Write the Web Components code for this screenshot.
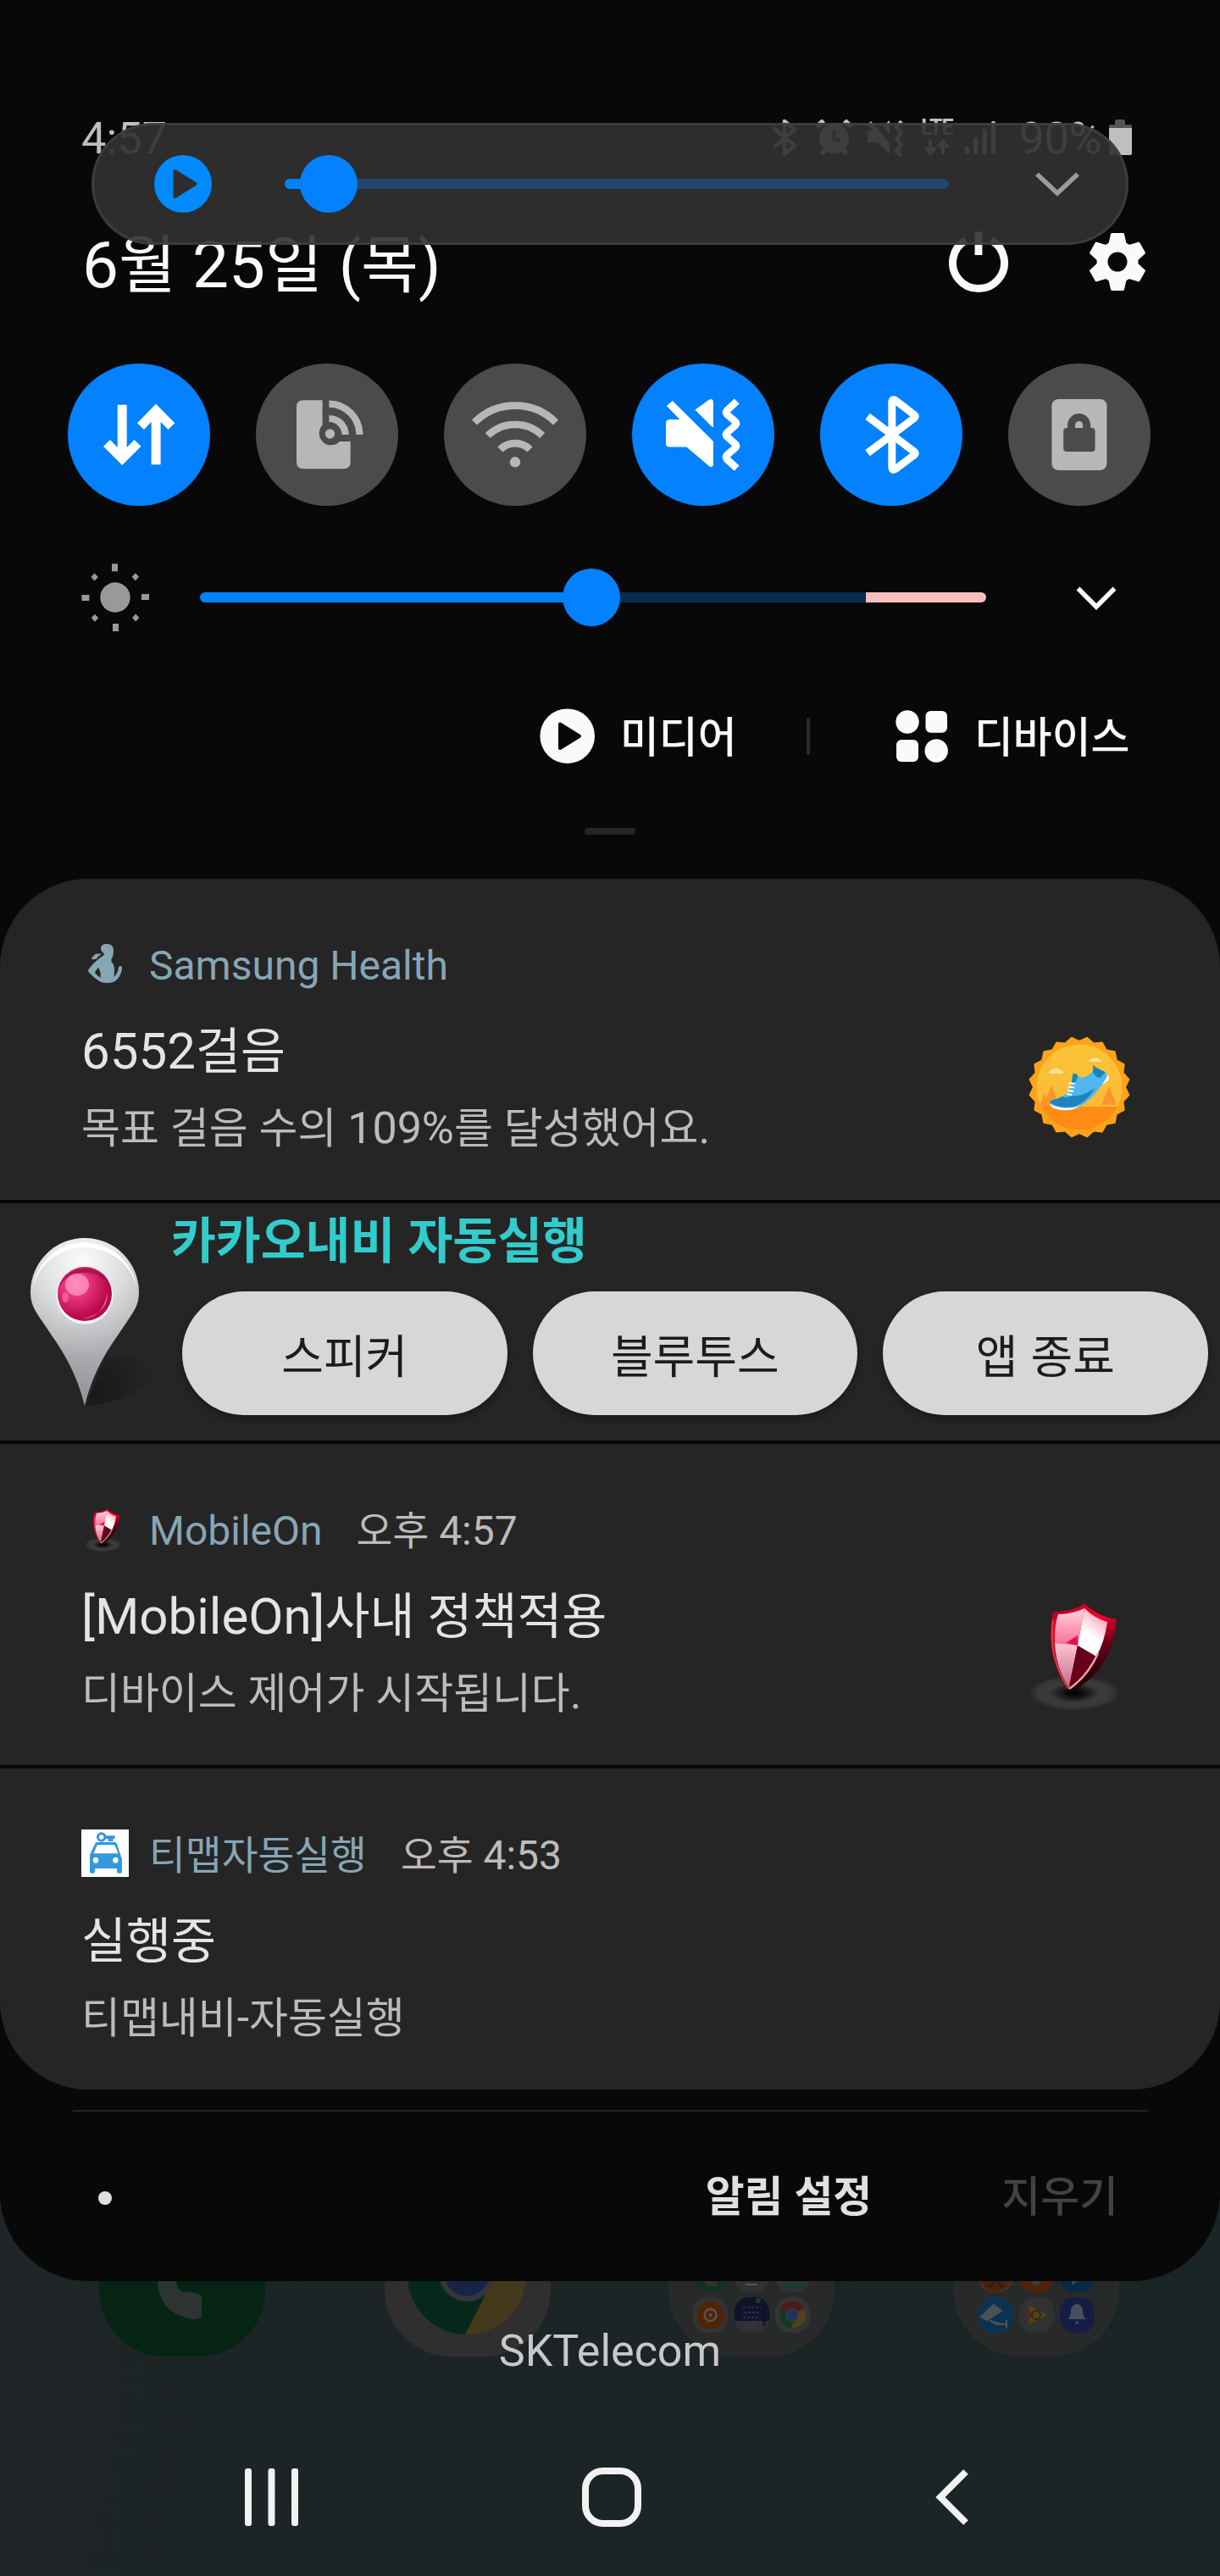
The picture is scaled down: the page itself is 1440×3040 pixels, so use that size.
<!DOCTYPE html>
<html lang="ko">
<head>
<meta charset="utf-8">
<title>Quick panel</title>
<style>
  html, body { margin: 0; padding: 0; background: #1d2426; }
  body { width: 1440px; height: 3040px; overflow: hidden; font-family: Roboto, "Noto Sans CJK KR", sans-serif; }
</style>
</head>
<body>
<phone-screen></phone-screen>
<script>
const BASE = `
  * { box-sizing: border-box; }
  svg { display: block; flex: none; }
  i { font-style: normal; font-size: var(--kr, .94em); letter-spacing: var(--ks, 0); line-height: 0; }
`;
/* Hangul runs are set slightly smaller than the Latin text beside them */
const ko = t => t.replace(/[가-힣]+/g, m => `<i>${m}</i>`);

function define(name, render) {
  customElements.define(name, class extends HTMLElement {
    constructor() { super(); this.attachShadow({ mode: 'open' }); }
    connectedCallback() { this.shadowRoot.innerHTML = `<style>${BASE}</style>` + render(this); }
  });
}

/* ---------- status bar ---------- */
define('status-bar', () => `
<style>
  :host { display: flex; margin-top: 133px; height: 60px; padding: 0 104px 0 96px; align-items: center;
    color: #bfbfbf; font-size: 52.500px; line-height: 60px; white-space: nowrap; }
  .sp { flex: 1; }
  .lte { display: flex; flex-direction: column; width: 40px; height: 44px; margin-left: 20px; align-items: center; }
  .lte b { font: 700 25px/20px Roboto, sans-serif; height: 23px; letter-spacing: -1px; }
  .pct { width: 97px; margin-left: 28px; }
</style>
<span>4:57</span><span class="sp"></span>
<svg width="30" height="44" viewBox="910 140 30 44" fill="none" stroke="#bfbfbf" stroke-width="4.5" stroke-linejoin="round"><path d="M912 150L937 171L925 181V142L937 152L912 173"/></svg>
<svg style="margin-left:22px" width="43" height="44" viewBox="962 140 43 44"><path d="M969 181l5-7M998 181l-5-7M963 149l8-8M1004 149l-8-8" stroke="#bfbfbf" stroke-width="5.500"/><circle cx="983.5" cy="162.500" r="17.500" fill="#bfbfbf"/><path d="M983.500 152v12h8" fill="none" stroke="#333" stroke-width="4"/></svg>
<svg style="margin-left:17px" width="43" height="44" viewBox="1022 140 43 44"><path fill="#bfbfbf" d="M1023 146l4-4l22 26v13l-14-14h-12v-14h6zM1049 141v17l-8-10z"/><path d="M1063 142l-6 7l6 7l-6 7l6 7l-6 7l6 6" fill="none" stroke="#bfbfbf" stroke-width="4"/></svg>
<div class="lte"><b>LTE</b><svg width="32" height="20" viewBox="0 0 32 20" fill="none" stroke="#bfbfbf" stroke-width="4"><path d="M8 1v15M2 10l6 7l6-7M23 18V3M17 10l6-7l6 7"/></svg></div>
<svg style="margin-left:13px" width="36" height="44" viewBox="1138 140 36 44" fill="#bfbfbf"><rect x="1138" y="172" width="5" height="9" rx="2"/><rect x="1148" y="161" width="5" height="20" rx="2"/><rect x="1158.500" y="151" width="5" height="30" rx="2"/><rect x="1169" y="142" width="5" height="39" rx="2"/></svg>
<span class="pct">90%</span>
<svg style="margin-left:9px" width="27" height="44" viewBox="1309 140 27 44"><path fill="#555" d="M1316 142q0-2 2-2h8q2 0 2 2v4h6q2 0 2 2v4h-27v-4q0-2 2-2h5z"/><path fill="#bfbfbf" d="M1309 150h27v30q0 2-2 2h-23q-2 0-2-2z"/></svg>
`);

/* ---------- floating volume bar ---------- */
define('volume-bar', () => `
<style>
  :host { position: absolute; z-index: 3; left: 108px; top: 145px; width: 1224px; height: 144px; border-radius: 72px;
    background: rgba(50,50,50,.908); border: 3px solid rgba(66,66,66,.75); background-clip: border-box;
    display: flex; align-items: center; padding-left: 71px; box-sizing: border-box; }
  slide-track { margin-left: 86px; }
  .chev { margin-left: 100px; margin-bottom: 1px; }
</style>
<svg width="68" height="68" viewBox="182 183 68 68"><circle cx="216" cy="217" r="34" fill="#018bff"/><path d="M206.500 202v30l24-15z" fill="#2e2e2e" stroke="#2e2e2e" stroke-width="4" stroke-linejoin="round"/></svg>
<slide-track width="784" value="52" rest="#23486d"></slide-track>
<svg class="chev" width="56" height="30" viewBox="1220 201 56 30"><path d="M1224 204.500L1248 227L1272 204.500" fill="none" stroke="#9b9b9b" stroke-width="5.500"/></svg>
`);

define('slide-track', el => {
  const w = +el.getAttribute('width'), v = +el.getAttribute('value'), rest = el.getAttribute('rest'), warn = +el.getAttribute('warn') || 0;
  return `
<style>
  :host { display: flex; align-items: center; flex: none; width: ${w}px; height: 68px; }
  .a, .b, .c { height: 12px; flex: none; }
  .a { width: ${v - 34}px; background: #0381fe; border-radius: 6px 0 0 6px; box-shadow: 4px 0 #0381fe; }
  .t { width: 68px; height: 68px; border-radius: 50%; background: #0381fe; flex: none; }
  .b { flex: 1; background: ${rest}; ${warn ? '' : 'border-radius: 0 6px 6px 0;'} box-shadow: -4px 0 ${rest}; }
  .t { position: relative; }
  .c { width: ${warn}px; background: #f6bfbc; border-radius: 0 6px 6px 0; }
</style><span class="a"></span><span class="t"></span><span class="b"></span>${warn ? '<span class="c"></span>' : ''}`;
});

/* ---------- date row ---------- */
define('date-row', () => `
<style>
  :host { display: flex; margin-top: 75px; height: 90px; padding: 0 88px 0 97px; align-items: center;
    font-size: 76.500px; line-height: 90px; color: #fafafa; white-space: nowrap; --kr: .965em; }
  span { flex: 1; }
</style>
<span>${ko('6월 25일 (목)')}</span>
<svg width="70" height="80" viewBox="1121 273 70 80"><path d="M1141 283.500A30.500 30.500 0 1 0 1171 283.500" fill="none" stroke="#fafafa" stroke-width="9"/><rect x="1151.600" y="273.500" width="8.800" height="27.500" fill="#fafafa"/></svg>
<svg style="margin-left:96px" width="66" height="80" viewBox="1287 273 66 80"><g transform="translate(1320 309)" fill="#fafafa" stroke="#fafafa" stroke-width="3" stroke-linejoin="round">
${[0, 60, 120, 180, 240, 300].map(a => `<path transform="rotate(${a})" d="M-6.500-32.500h13l3 13h-19z"/>`).join('')}
<circle r="18" fill="none" stroke-width="13"/></g></svg>
`);

/* ---------- quick toggles ---------- */
const TILES = {
  data: `<path fill="#fff" d="M58.700 48.700h11V99L78.500 90L86.500 97.700L64.200 120L42 97.700L50 90L58.700 99zM98.600 119.300V68.700L90 78L82 70.300L104 47.700L126.300 70.300L118.500 78L109.600 68.700V119.300z"/>`,
  share: `<path fill="#b7b7b7" d="M56 43.300H78.600V72.500A14 14 0 1 0 99 92H111.700V116.300Q111.700 124.300 103.700 124.300H56Q48 124.300 48 116.300V51.300Q48 43.300 56 43.300z"/><circle cx="87.500" cy="83" r="5.700" fill="#b7b7b7"/><path d="M86.400 65A19 19 0 0 1 105.600 84M86.400 47.700A36 36 0 0 1 122.300 84" fill="none" stroke="#b7b7b7" stroke-width="8.200"/>`,
  wifi: `<circle cx="84" cy="116.300" r="6.200" fill="#b7b7b7"/><path d="M36 69.500A68 68 0 0 1 132 69.500M51.800 85A46.500 46.500 0 0 1 116.200 85M66.500 101.500A24.500 24.500 0 0 1 101.500 101.500" fill="none" stroke="#b7b7b7" stroke-width="8.600"/>`,
  mute: `<path fill="#fff" stroke="#fff" stroke-linejoin="round" d="M41.300 50L47.800 44.500L95.300 91.700V120.500Q94 122.500 91.500 121L64.300 98H43.500Q40.500 98 40.500 95V70Q40.500 66.700 43.500 66.700H57.400zM95.300 44.500V75L75 54.700L90.500 43.500Q95 41 95.300 44.500z"/><path d="M123.700 44.500L112 55.500Q110 57.700 112 60L122 68.500Q124 70.800 122 73L112 81.700Q110 84 112 86.300L122 95Q124 97.300 122 99.500L112 108Q110 110.500 112 113L123.700 123.700" fill="none" stroke="#fff" stroke-width="8.500"/>`,
  bt: `<path d="M56 62.300L111 104Q113.500 106 111 108L89 124.500Q84.800 127 84.800 122V46Q84.800 41 89 43.500L111 60.500Q113.500 62.500 111 64.500L56 105.700" fill="none" stroke="#fff" stroke-width="9" stroke-linejoin="round"/>`,
  lock: `<rect x="51.400" y="42" width="65" height="84" rx="8" fill="#b7b7b7"/><rect x="65.200" y="76" width="37.300" height="28" rx="4" fill="#4b4b4b"/><path d="M74.600 78V72.500a9 9 0 0 1 18 0V78" fill="none" stroke="#4b4b4b" stroke-width="9"/>`
};
define('quick-tile', el => `
<style>
  :host { display: block; width: 168px; height: 168px; border-radius: 50%; background: ${el.hasAttribute('on') ? '#0381fe' : '#4b4b4b'}; }
</style>
<svg width="168" height="168" viewBox="0 0 168 168">${TILES[el.getAttribute('kind')]}</svg>`);

define('tile-row', () => `
<style>:host { display: flex; gap: 54px; margin-top: 71px; padding-left: 80px; height: 168px; }</style>
<quick-tile kind="data" on></quick-tile><quick-tile kind="share"></quick-tile><quick-tile kind="wifi"></quick-tile>
<quick-tile kind="mute" on></quick-tile><quick-tile kind="bt" on></quick-tile><quick-tile kind="lock"></quick-tile>`);

/* ---------- brightness ---------- */
define('brightness-row', () => `
<style>
  :host { display: flex; align-items: center; height: 80px; margin-top: 68px; padding-left: 96px; }
  slide-track { margin: 0 105px 0 60px; }
</style>
<svg width="80" height="80" viewBox="96 665 80 80" fill="#999"><circle cx="136" cy="705" r="17.700"/>
<rect x="132" y="665.300" width="7" height="9"/><rect x="133" y="736" width="7" height="9"/><rect x="96.400" y="702" width="9" height="7"/><rect x="167" y="701" width="9" height="7"/>
${[[111.600, 681], [159.800, 680.700], [112, 729.300], [160.200, 729]].map(p => `<path transform="translate(${p})" d="M0-4.500L4.200 0L0 4.500L-4.200 0z"/>`).join('')}</svg>
<slide-track width="928" value="462" rest="#062c50" warn="142"></slide-track>
<svg width="50" height="30" viewBox="1269 690 50 30"><path d="M1272.500 694.500L1294 716L1315.500 694.500" fill="none" stroke="#fafafa" stroke-width="5.500"/></svg>`);

/* ---------- media / devices ---------- */
define('media-row', () => `
<style>
  :host { display: flex; align-items: center; height: 66px; margin-top: 91px; padding-left: 637px;
    font-size: 53px; line-height: 66px; font-weight: 500; color: #fafafa; white-space: nowrap; }
  .m { margin-left: 29px; width: 134px; padding-top: 2px; }
  .bar { margin-left: 86px; width: 4px; height: 44px; border-radius: 2px; background: #2a2a2a; }
  .d { margin-left: 101px; }
  .n { margin-left: 31px; padding-top: 2px; }
</style>
<svg width="66" height="66" viewBox="637 836 66 66"><circle cx="669.700" cy="868.700" r="32.300" fill="#fafafa"/><path d="M661 854.500v28.500l23-14.200z" fill="#080808" stroke="#080808" stroke-width="4" stroke-linejoin="round"/></svg>
<span class="m">${ko('미디어')}</span><span class="bar"></span>
<svg class="d" width="62" height="66" viewBox="1057 836 62 66" fill="#fafafa"><circle cx="1071" cy="852" r="13.700"/><rect x="1092.500" y="839" width="25.500" height="25.700" rx="6"/><rect x="1058" y="873" width="26" height="26" rx="6"/><circle cx="1105.200" cy="886" r="13.700"/></svg>
<span class="n">${ko('디바이스')}</span>`);

/* ---------- notification icons ---------- */
const SHIELD = `
<defs>
<radialGradient id="sh"><stop offset="0" stop-color="#000"/><stop offset=".22" stop-color="#111"/><stop offset=".55" stop-color="#3b3b3b"/><stop offset=".8" stop-color="#383838"/><stop offset="1" stop-color="#252525"/></radialGradient>
<linearGradient id="r" x1="0" y1="0" x2=".3" y2="1"><stop offset="0" stop-color="#a00020"/><stop offset=".35" stop-color="#f5002c"/><stop offset=".65" stop-color="#6a0018"/><stop offset="1" stop-color="#1a0008"/></linearGradient>
<linearGradient id="p1" x1="0" y1="0" x2="0" y2="1"><stop offset="0" stop-color="#ffd3e0"/><stop offset="1" stop-color="#ff6d98"/></linearGradient>
<linearGradient id="p2" x1=".8" y1="0" x2=".3" y2="1"><stop offset="0" stop-color="#ff8fb0"/><stop offset=".6" stop-color="#fff"/></linearGradient>
<linearGradient id="p3" x1="0" y1="0" x2="0" y2="1"><stop offset="0" stop-color="#ffc4d6"/><stop offset="1" stop-color="#c66a8c"/></linearGradient>
</defs>
<ellipse cx="1268" cy="1998" rx="54" ry="21" fill="url(#sh)"/>
<path d="M1280 1892Q1296 1908 1318 1911Q1314 1966 1271 1993L1261 1995Q1234 1958 1242 1906Q1244 1901 1249 1902Q1270 1900 1280 1892z" fill="url(#r)"/>
<path d="M1243 1912Q1237 1956 1261 1993" fill="none" stroke="#e23a45" stroke-width="2"/>
<path d="M1249 1905Q1266 1905 1280 1898L1272 1941L1245 1939Q1244 1920 1249 1905z" fill="url(#p1)"/>
<path d="M1280 1898Q1292 1910 1307 1914Q1304 1937 1294 1955L1272 1942z" fill="url(#p2)"/>
<path d="M1245 1939L1272 1941L1262 1992Q1246 1968 1245 1939z" fill="url(#p3)"/>
<path d="M1258 1939L1272 1930V1942z" fill="#e8104e"/>
<path d="M1272 1942L1294 1955Q1282 1977 1262 1989z" fill="#66001c"/>
<path d="M1296 1951Q1284 1978 1262 1993" fill="none" stroke="#efa0a4" stroke-width="2.600"/>`;

const ICONS = {
  health: `<svg width="56" height="56" viewBox="96 1109 56 56" fill="#87a6b5"><path d="M126.500 1114q7.500 0 7.500 8q0 5-1.500 8q-2 2-1 5q4 3 3.500 12q0 4-1 6q4-3 5.500-8q0-5 2.500-5q2.500 0 2 4q-2 10-9 14.500q-9 3-17 0q-8-5-13-11q-2-2 0-4q5-7 14-14q4-2 4-4q-4-3-4-6q0-6 7.500-5.500z"/><path d="M108 1132q2-6 7-6.500l5 0q-4 3-6 6q-3 1-6 .5z"/><path d="M116 1142q-5 5-3.500 7l6 5q1-7-2.500-12z" fill="#252525"/></svg>`,
  shield: `<svg width="56" height="56" viewBox="1204.400 1880.500 140 140">${SHIELD}</svg>`,
  car: `<svg width="56" height="56" viewBox="96 2159 56 56"><rect x="96" y="2159" width="56" height="56" fill="#fff"/><g fill="#3498db"><circle cx="119.700" cy="2168" r="4.200" fill="none" stroke="#3498db" stroke-width="3"/><path d="M124 2166.300h11.500v3.800h-2v3h-6v-3h-3.500z"/><path d="M112 2176q.5-2 2.500-2h21q2 0 2.500 2l6 18v14.500q0 2.200-2 2.200h-2q-2 0-2-2v-3.700h-26v3.700q0 2-2 2h-2q-2 0-2-2.200V2189z"/></g><path fill="#fff" d="M114.800 2177.300h20.400l4.300 10h-29z"/><ellipse cx="113" cy="2195.300" rx="3.200" ry="3.500" fill="#fff"/><ellipse cx="136.400" cy="2195.300" rx="3.200" ry="3.500" fill="#fff"/></svg>`
};

let burst = '';
for (let k = 0; k < 40; k++) {
  const a = (k * 9 - 90) * Math.PI / 180, r = k % 2 ? 59 : 54;
  burst += (k ? 'L' : 'M') + (1274 + r * Math.cos(a)).toFixed(1) + ' ' + (1280 + r * Math.sin(a)).toFixed(1);
}
const LARGE = {
  badge: `<svg width="122" height="122" viewBox="1213 1219 122 122">
<defs><linearGradient id="g" x1="0" y1="0" x2="0" y2="1"><stop offset="0" stop-color="#fbc337"/><stop offset="1" stop-color="#fcb83a"/></linearGradient><clipPath id="c"><circle cx="1274" cy="1280" r="50.500"/></clipPath></defs>
<path d="${burst}z" fill="#fba31a" stroke="#fba31a" stroke-width="2" stroke-linejoin="round"/>
<g clip-path="url(#c)"><rect x="1220" y="1225" width="110" height="110" fill="url(#g)"/>
<path d="M1233 1286l-6 17h12zM1241 1277l-9 26h18zM1309 1279l-9 22h18z" fill="#fd962a"/>
<rect x="1220" y="1303" width="110" height="32" fill="#fd8b14"/>
<path d="M1238 1264q1-5 6-5q3-3 6 0q5 1 5 5zM1285 1250q2-4 6-4q5-2 9 3v1z" fill="#fde09a"/></g>
<path d="M1239.500 1300Q1240 1305 1252 1307Q1268 1309 1277 1300Q1291 1283 1308 1272Q1310 1268 1307 1265L1303 1268Q1290 1289 1276 1299Q1262 1306 1240 1299z" fill="#fff"/>
<path d="M1290.500 1253.500Q1291 1257 1297 1259L1304.500 1262Q1308 1265 1306 1269Q1294 1289 1279 1300Q1268 1306 1253 1304Q1241 1303 1239 1298Q1240 1295 1248 1294Q1262 1288 1264 1279Q1265 1270 1266.500 1264Q1270 1263 1272.500 1267Q1277 1271 1284 1266Q1292 1263 1290.500 1253.500z" fill="#4fb7ee"/>
<path d="M1239 1298Q1240 1295 1247 1294L1254 1291Q1258 1293 1263 1291L1277 1289Q1285 1286 1293 1281Q1280 1300 1267 1303Q1252 1306 1239 1298z" fill="#1e84bd"/>
<path d="M1290.500 1253.500Q1292 1257 1304.500 1262L1299 1269Q1292 1268 1290 1262zM1266.500 1264Q1270 1263 1272.500 1267L1268 1277L1264.500 1276z" fill="#1787b9"/>
<path d="M1262 1275l7 1M1261 1279.500l7 1M1260 1284l7 1M1259 1288l6 1" stroke="#fff" stroke-width="2.200"/></svg>`,
  shield: `<svg width="122" height="122" viewBox="1213 1886 122 122" overflow="visible">${SHIELD}</svg>`
};

/* ---------- notification card ---------- */
define('notice-card', el => {
  const g = n => el.getAttribute(n) || '';
  return `
<style>
  :host { display: flex; height: 379px; padding: 0 105px 0 96px; background: #252525; white-space: nowrap; --kr: .96em; }
  .txt { flex: 1; padding-top: 72px; }
  .head { display: flex; height: 60px; font-size: 48px; line-height: 61px; color: #87a6b5; --kr: .97em; }
  .app { margin-left: 24px; }
  .time { margin-left: 40px; color: #bcbcbc; }
  .title { margin-top: 36px; font-size: 60px; line-height: 71px; height: 70px; color: #e4e4e4; }
  .body { margin-top: 24px; font-size: 52px; line-height: 65px; height: 64px; color: #bcbcbc; }
  .large { padding-top: ${g('large') === 'badge' ? 185 : 182}px; }
</style>
<div class="txt">
  <div class="head">${ICONS[g('icon')]}<span class="app">${ko(g('app'))}</span>${g('time') ? `<span class="time">${ko(g('time'))}</span>` : ''}</div>
  <div class="title">${ko(g('heading'))}</div>
  <div class="body">${ko(g('body'))}</div>
</div>
<div class="large">${LARGE[g('large')] || ''}</div>`;
});

define('pill-button', () => `
<style>
  :host { display: flex; width: 383.500px; height: 146px; border-radius: 73px; background: #d6d8d7; color: #1c1c1c;
    align-items: center; justify-content: center; box-shadow: 0 5px 8px rgba(0,0,0,.3); padding-top: 1px; box-sizing: border-box;
    font-family: "Noto Sans CJK KR", sans-serif; font-size: 54px; line-height: 60px; }
</style><slot></slot>`);

define('navi-card', () => `
<style>
  :host { display: flex; height: 280px; background: #252525; white-space: nowrap; --kr: .95em; }
  .pin { padding: 35px 0 0 30px; width: 202px; flex: none; }
  .title { height: 70px; line-height: 70px; margin-top: 10px; font-size: 60.500px; font-weight: 700; color: #33cccc; }
  .btns { display: flex; gap: 30px; margin: 24px 0 0 13px; }
</style>
<div class="pin"><svg width="160" height="215" viewBox="30 1455 160 215">
<defs>
<radialGradient id="w" gradientUnits="userSpaceOnUse" cx="96" cy="1490" r="150"><stop offset="0" stop-color="#fbfbfb"/><stop offset=".35" stop-color="#dcddde"/><stop offset=".75" stop-color="#a9aaad"/><stop offset="1" stop-color="#98999d"/></radialGradient>
<radialGradient id="b" gradientUnits="userSpaceOnUse" cx="90" cy="1516" r="38"><stop offset="0" stop-color="#ff5fa0"/><stop offset=".5" stop-color="#e32a74"/><stop offset="1" stop-color="#b80b4c"/></radialGradient>
<radialGradient id="s" gradientUnits="userSpaceOnUse" cx="110" cy="1642" r="72"><stop offset="0" stop-color="#181818"/><stop offset="1" stop-color="#252525"/></radialGradient>
</defs>
<path d="M101 1659Q150 1655 176 1630Q186 1612 160 1600L124 1602z" fill="url(#s)"/>
<path d="M100 1659C88 1610 66 1584 51 1561C43 1549 36 1541 36 1525A64 64 0 0 1 164 1525C164 1541 157 1549 149 1561C134 1584 112 1610 100 1659z" fill="url(#w)"/>
<path d="M39 1520A61.500 61.500 0 0 1 161 1520A62 58 0 0 0 39 1520z" fill="#fff"/>
<circle cx="100" cy="1529" r="33.500" fill="#f6f6f6"/><circle cx="100" cy="1527" r="32" fill="url(#b)"/>
<path d="M68.500 1523A32 32 0 0 1 131.500 1523Q124 1502 100 1502Q76 1502 68.500 1523z" fill="#9c1048" opacity=".8"/>
<ellipse cx="91" cy="1516" rx="14" ry="13" fill="#ffa6cb" opacity=".65"/><ellipse cx="77" cy="1531" rx="4" ry="6" fill="#f77bac" opacity=".6"/>
<path d="M127 1525Q128 1550 98 1556Q121 1556 127 1525z" fill="#f48bb4" opacity=".75"/></svg></div>
<div><div class="title">${ko('카카오내비 자동실행')}</div>
<div class="btns"><pill-button>스피커</pill-button><pill-button>블루투스</pill-button><pill-button>앱 종료</pill-button></div></div>`);

define('notice-list', () => `
<style>:host { display: flex; flex-direction: column; gap: 4px; margin-top: 52px; border-radius: 104px; overflow: hidden; height: 1429px; }</style>
<notice-card icon="health" app="Samsung Health" heading="6552걸음" body="목표 걸음 수의 109%를 달성했어요." large="badge"></notice-card>
<navi-card></navi-card>
<notice-card icon="shield" app="MobileOn" time="오후 4:57" heading="[MobileOn]사내 정책적용" body="디바이스 제어가 시작됩니다." large="shield"></notice-card>
<notice-card icon="car" app="티맵자동실행" time="오후 4:53" heading="실행중" body="티맵내비-자동실행"></notice-card>`);

define('panel-footer', () => `
<style>
  :host { display: block; padding-top: 24px; --kr: .96em; }
  .line { margin: 0 84px 0 84px; height: 2px; border-radius: 20px / 2px; background: #262626; }
  .row { display: flex; align-items: center; height: 202px; padding: 0 120px 0 116px; font-size: 52px; line-height: 64px; white-space: nowrap; }
  .dot { width: 16px; height: 16px; border-radius: 50%; background: #e0e0e0; margin-top: 2px; }
  .set { margin-left: auto; font-weight: 700; color: #e0e0e0; }
  .clr { margin-left: 153px; color: #424242; font-weight: 500; }
</style>
<div class="line"></div>
<div class="row"><span class="dot"></span><span class="set">${ko('알림 설정')}</span><span class="clr">${ko('지우기')}</span></div>`);

define('quick-panel', () => `
<style>
  :host { display: flex; flex-direction: column; position: relative; z-index: 1; height: 2692px; background: #080808; border-radius: 0 0 104px 104px; overflow: hidden; }
  .handle { width: 60px; height: 8px; border-radius: 4px; background: #262626; margin: 75px auto 0; flex: none; }
  :host > * { flex: none; }
</style>
<status-bar></status-bar><volume-bar></volume-bar><date-row></date-row><tile-row></tile-row><brightness-row></brightness-row><media-row></media-row>
<div class="handle"></div><notice-list></notice-list><panel-footer></panel-footer>`);

/* ---------- dimmed home screen behind the panel ---------- */
const sq = (x, f) => `<rect x="${x}" y="2585" width="196" height="196" rx="78" fill="${f}"/>`;
const mini = (x, y, f) => `<rect x="${x - 20}" y="${y}" width="41" height="42" rx="17" fill="${f}"/>`;
define('home-dock', () => `
<style>:host { display: block; }</style>
<svg width="1440" height="197" viewBox="0 2585 1440 197">
${sq(117, '#062414')}<path d="M186 2680v12q1 35 36 44q10 3 16-2v-25q-14-6-22-4q-8-4-8-13v-14z" fill="#2d3332"/>
${sq(454, '#2f2f2f')}
<circle cx="551" cy="2685" r="70" fill="#06281a"/><path d="M577 2700L549 2755A70 70 0 0 0 621 2680H580z" fill="#44391a"/><circle cx="551" cy="2683" r="33" fill="#343639"/><circle cx="551" cy="2683" r="26.500" fill="#172448"/>
${sq(789, '#272a29')}
${mini(839, 2663, '#14321c')}${mini(887, 2663, '#303231')}${mini(935, 2663, '#303231')}
<path d="M831 2692h16l-2 6h-10z" fill="#303431"/><path d="M880 2696h14" stroke="#555" stroke-width="2"/><path d="M924 2699l11-16l11 16z" fill="none" stroke="#12402a" stroke-width="3"/>
${mini(838, 2711, '#333332')}<circle cx="838.500" cy="2732" r="16" fill="#512408"/><circle cx="838.500" cy="2732" r="7" fill="none" stroke="#555" stroke-width="2.500"/><circle cx="838.500" cy="2732" r="2" fill="#555"/>
${mini(887, 2711, '#11112a')}<path d="M867 2739h41q-2 14-17 14h-8q-13 0-16-14z" fill="#303236"/><path d="M887 2739l4 4h-4v10" fill="#3c3e42"/><path d="M877 2723h21M878 2729h19M877 2735h21" stroke="#2b2e42" stroke-width="2.400" stroke-dasharray="3 2"/><circle cx="895" cy="2715" r="3" fill="#17401c"/><path d="M902 2739v6" stroke="#1c1640" stroke-width="4"/>
${mini(935, 2711, '#333433')}<circle cx="935" cy="2732" r="15" fill="#123824"/><path d="M921 2725A15 15 0 0 1 949 2725L935 2732z" fill="#4d1a18"/><path d="M949 2725A15 15 0 0 1 934 2747L941 2728z" fill="#50421a"/><circle cx="935" cy="2732" r="7" fill="#1e3260" stroke="#383c3e" stroke-width="1.500"/>
${sq(1125, '#272a29')}
${mini(1175, 2663, '#3b3330')}<circle cx="1175" cy="2686" r="18" fill="#4e2004"/><path d="M1167 2699l8-8l8 8" fill="none" stroke="#222" stroke-width="3"/>${mini(1223, 2663, '#50220a')}<circle cx="1223" cy="2690" r="7" fill="#3e3a38"/>${mini(1271, 2663, '#06294a')}<path d="M1265 2697v-8l12 0z" fill="#444"/>
${mini(1175, 2711, '#0f3150')}<path d="M1158 2734l15-14l9 7l-17 11zM1168 2738l8 5h12M1188 2738v10" fill="#4a5258" stroke="#4a5258" stroke-width="2"/>
${mini(1223, 2711, '#303231')}<path d="M1213 2720l23 12l-23 12z" fill="#574016"/><path d="M1213 2720l5 12l-5 12z" fill="#5a241a"/><circle cx="1223" cy="2732" r="5" fill="none" stroke="#2e2a10" stroke-width="2"/>
${mini(1271, 2711, '#161c44')}<path d="M1260 2737q4-3 4-11q1-6 7-7q6 1 7 7q0 8 4 11z" fill="#4a4e5c"/><circle cx="1271" cy="2741" r="2" fill="#2f4a78"/>
</svg>`);

define('nav-bar', () => `
<style>
  :host { display: flex; align-items: center; height: 190px; padding-left: 289px; }
</style>
<svg width="63" height="68" viewBox="0 0 63 68" fill="#f2f2f2"><rect width="8" height="68" rx="3"/><rect x="27.500" width="8" height="68" rx="3"/><rect x="55" width="8" height="68" rx="3"/></svg>
<svg style="margin-left:335px" width="70" height="70" viewBox="0 0 70 70"><rect x="4" y="4" width="62" height="62" rx="21" fill="none" stroke="#f2f2f2" stroke-width="8"/></svg>
<svg style="margin-left:347px" width="40" height="68" viewBox="0 0 40 68"><path d="M36 4L6 34L36 64" fill="none" stroke="#f2f2f2" stroke-width="8"/></svg>`);

define('phone-screen', () => `
<style>
  :host { display: flex; flex-direction: column; width: 1440px; height: 3040px; overflow: hidden; position: relative;
    background: linear-gradient(100deg, #232727 0%, #1c2426 45%, #1a2525 100%); }
  :host > * { flex: none; }
  home-dock { margin-top: -107px; }
  .carrier { height: 60px; margin-top: -37px; line-height: 60px; text-align: center; font-size: 52px; color: #c8c8c8; position: relative; }
  nav-bar { margin-top: 47px; }
</style>
<quick-panel></quick-panel>
<home-dock></home-dock>
<div class="carrier">SKTelecom</div>
<nav-bar></nav-bar>`);
</script>
</body>
</html>
